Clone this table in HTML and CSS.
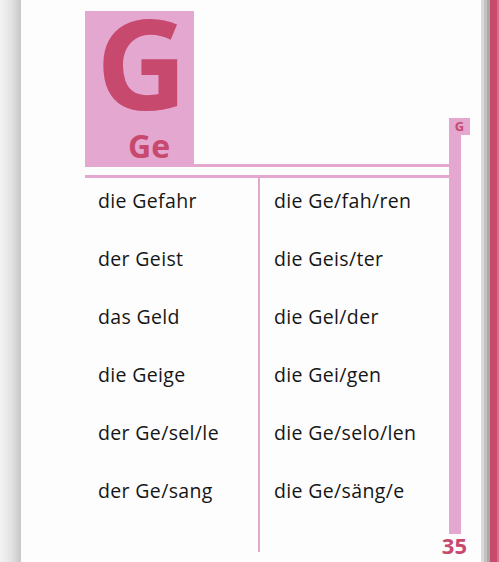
FILE: index.html
```html
<!DOCTYPE html>
<html lang="de">
<head>
<meta charset="utf-8">
<title>G – Ge</title>
<link rel="stylesheet" href="styles.css">
</head>
<body>
<div class="spread">
  <div class="gutter"></div>
  <div class="page">
    <div class="main">
      <div class="header">
        <div class="letter-box">
          <div class="big-letter">G</div>
          <div class="syllable">Ge</div>
        </div>
        <div class="header-rule"></div>
      </div>
      <div class="rule"></div>
      <div class="table">
        <ul class="col col-left">
          <li>die Gefahr</li>
          <li>der Geist</li>
          <li>das Geld</li>
          <li>die Geige</li>
          <li>der Ge/sel/le</li>
          <li>der Ge/sang</li>
        </ul>
        <ul class="col col-right">
          <li>die Ge/fah/ren</li>
          <li>die Geis/ter</li>
          <li>die Gel/der</li>
          <li>die Gei/gen</li>
          <li>die Ge/selo/len</li>
          <li>die Ge/säng/e</li>
        </ul>
      </div>
    </div>
    <div class="side">
      <div class="tab">G</div>
      <div class="bar"></div>
      <div class="page-num">35</div>
    </div>
  </div>
  <div class="edge"></div>
</div>
</body>
</html>
```

FILE: styles.css
```css
html, body {
  margin: 0;
  padding: 0;
  background: #fdfdfd;
}

.spread {
  display: flex;
  width: 499px;
  height: 562px;
  overflow: hidden;
  font-family: "Open Sans", "Noto Sans", sans-serif;
  color: #161616;
}

.gutter {
  width: 21px;
  flex: none;
  background: linear-gradient(to right, #f3f3f3 0%, #e2e2e2 55%, #c7c7c7 100%);
}

.page {
  width: 460px;
  flex: none;
  display: flex;
  padding-left: 64px;
  box-sizing: border-box;
  background: #fdfdfd;
}

.main {
  width: 364px;
  flex: none;
  display: flex;
  flex-direction: column;
  padding-top: 11px;
}

.header {
  display: flex;
  height: 156px;
}

.letter-box {
  width: 109px;
  height: 156px;
  flex: none;
  background: #e4a7d0;
  color: #c8496e;
  font-weight: 700;
  box-sizing: border-box;
  padding-left: 11px;
}

.big-letter {
  font-size: 126px;
  line-height: 100px;
  height: 100px;
}

.syllable {
  font-size: 32px;
  line-height: 32px;
  margin-top: 18.6px;
  padding-left: 32px;
}

.header-rule {
  flex: 1;
  align-self: flex-end;
  height: 3px;
  background: #e4a7d0;
}

.rule {
  height: 3px;
  margin-top: 8px;
  background: #e4a7d0;
}

.table {
  display: flex;
  height: 374px;
}

.col {
  list-style: none;
  margin: 0;
  padding-top: 10.4px;
  display: flex;
  flex-direction: column;
  gap: 32px;
  font-size: 19.5px;
  letter-spacing: 0.35px;
  line-height: 26px;
}

.col-left {
  width: 175px;
  flex: none;
  box-sizing: border-box;
  padding-left: 13px;
  border-right: 2px solid #e4a7d0;
}

.col-right {
  padding-left: 14px;
}

.side {
  width: 12px;
  flex: none;
  display: flex;
  flex-direction: column;
  padding-top: 118px;
  padding-bottom: 6px;
  box-sizing: border-box;
  height: 562px;
}

.tab {
  width: 21px;
  height: 17px;
  flex: none;
  background: #e4a7d0;
  color: #c8496e;
  font-weight: 700;
  font-size: 13px;
  line-height: 17px;
  text-align: center;
}

.bar {
  flex: 1;
  background: #e4a7d0;
}

.page-num {
  width: 30px;
  margin-left: -12px;
  text-align: right;
  font-weight: 700;
  font-size: 22px;
  line-height: 22px;
  color: #c8496e;
  flex: none;
}

.edge {
  width: 18px;
  flex: none;
  background: linear-gradient(to right,
    #dadada 0, #dadada 3px,
    #c2c2c2 3px, #c2c2c2 6px,
    #a9a9a9 6px, #a9a9a9 9px,
    #c84b6d 9px, #c84b6d 16px,
    #d4708d 16px, #d4708d 18px);
}
```
